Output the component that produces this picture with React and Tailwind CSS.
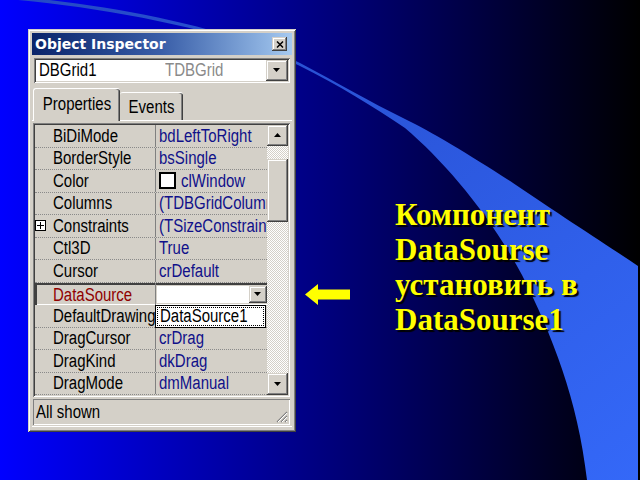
import React from "react";

const raised =
  "shadow-[inset_-1px_-1px_0_#404040,inset_1px_1px_0_#d4d0c8,inset_-2px_-2px_0_#808080,inset_2px_2px_0_#ffffff]";
const sunken =
  "shadow-[inset_1px_1px_0_#808080,inset_-1px_-1px_0_#ffffff,inset_2px_2px_0_#404040,inset_-2px_-2px_0_#d4d0c8]";

function T({ children, className = "" }) {
  return <span className={"inline-block scale-y-[1.2] whitespace-nowrap " + className}>{children}</span>;
}

function DownTri() {
  return (
    <svg width="8" height="5" viewBox="0 0 8 5">
      <polygon points="0,0 7,0 3.5,4" fill="#000" />
    </svg>
  );
}

function UpTri() {
  return (
    <svg width="8" height="5" viewBox="0 0 8 5">
      <polygon points="0,4 7,4 3.5,0" fill="#000" />
    </svg>
  );
}

const rows = [
  { n: "BiDiMode", v: "bdLeftToRight" },
  { n: "BorderStyle", v: "bsSingle" },
  { n: "Color", v: "clWindow", box: true },
  { n: "Columns", v: "(TDBGridColumns)" },
  { n: "Constraints", v: "(TSizeConstraints)", plus: true },
  { n: "Ctl3D", v: "True" },
  { n: "Cursor", v: "crDefault" },
  { n: "DataSource", v: "", ds: true },
  { n: "DefaultDrawing", v: "True" },
  { n: "DragCursor", v: "crDrag" },
  { n: "DragKind", v: "dkDrag" },
  { n: "DragMode", v: "dmManual" },
];

function Row({ r }) {
  if (r.ds) {
    return (
      <div className="flex h-[22.5px] shadow-[inset_2px_2px_0_#404040,inset_0_-1px_0_#ffffff]">
        <div className="w-[120px] shrink-0 flex items-center pl-[18px] pt-[2px] overflow-hidden text-[#900000]">
          <T>{r.n}</T>
        </div>
        <div className="w-px bg-[#808080] self-stretch" />
        <div className="flex-1 flex pt-[3px] pb-[2px] pl-px">
          <div className="flex-1 bg-white" />
          <div className={"w-[18px] bg-[#d4d0c8] flex items-center justify-center " + raised}>
            <DownTri />
          </div>
        </div>
      </div>
    );
  }
  return (
    <div className="flex h-[22.5px] border-b border-dotted border-[#8a8a8a]">
      <div className="w-[120px] shrink-0 flex items-center relative overflow-hidden">
        {r.plus && (
          <div className="absolute left-0 top-[5px] w-[11px] h-[11px] border border-black bg-white flex items-center justify-center">
            <svg width="7" height="7" viewBox="0 0 7 7">
              <rect x="0" y="3" width="7" height="1" fill="#000" />
              <rect x="3" y="0" width="1" height="7" fill="#000" />
            </svg>
          </div>
        )}
        <T className="ml-[18px]">{r.n}</T>
      </div>
      <div className="w-px bg-[#808080] self-stretch" />
      <div className="flex-1 flex items-center pl-[3px] overflow-hidden text-[#10108a]">
        {r.box && <div className="w-[17px] h-[17px] border-2 border-black bg-white mr-[5px] shrink-0" />}
        <T>{r.v}</T>
      </div>
    </div>
  );
}

function Inspector() {
  return (
    <div
      className={
        "ml-[28px] mt-[29px] w-[268px] h-[403px] bg-[#d4d0c8] p-[4px] flex flex-col font-['Liberation_Sans',Arial,sans-serif] text-[15px] text-black " +
        "shadow-[inset_1px_1px_0_#d4d0c8,inset_-1px_-1px_0_#404040,inset_2px_2px_0_#ffffff,inset_-2px_-2px_0_#808080]"
      }
    >
      {/* title bar */}
      <div className="h-[22px] shrink-0 flex items-center justify-between bg-gradient-to-r from-[#0a246a] via-[#3a5ea8] to-[#a6caf0]">
        <span className="pl-[3px] font-['DejaVu_Sans',sans-serif] font-bold text-[14px] text-white leading-none">
          Object Inspector
        </span>
        <div className={"mr-[5px] w-[15px] h-[14px] bg-[#d4d0c8] flex items-center justify-center " + raised}>
          <svg width="8" height="7" viewBox="0 0 8 7">
            <path d="M1 0.5 L7 6.5 M7 0.5 L1 6.5" stroke="#000" strokeWidth="1.5" />
          </svg>
        </div>
      </div>

      {/* combo */}
      <div className={"mt-[3px] mx-[2px] h-[25px] shrink-0 bg-white flex items-center pl-[5px] pr-[2px] " + sunken}>
        <T className="w-[126px]">DBGrid1</T>
        <T className="flex-1 text-[#8a8a8a]">TDBGrid</T>
        <div className={"w-[22px] h-[21px] bg-[#d4d0c8] flex items-center justify-center " + raised}>
          <DownTri />
        </div>
      </div>

      {/* tabs */}
      <div className="mt-[5px] h-[32px] shrink-0 flex items-end pl-px relative z-10">
        <div className="h-[33px] w-[87px] -mb-px bg-[#d4d0c8] rounded-t-[3px] border-t border-l border-white shadow-[inset_-1px_0_0_#404040,inset_-2px_0_0_#808080] flex items-center justify-center pb-[2px]">
          <T>Properties</T>
        </div>
        <div className="h-[28px] w-[63px] bg-[#d4d0c8] rounded-t-[3px] border-t border-white shadow-[inset_-1px_0_0_#404040,inset_-2px_0_0_#808080] flex items-center justify-center pt-[2px]">
          <T>Events</T>
        </div>
      </div>

      {/* panel */}
      <div className="flex-1 flex flex-col border-t border-white">
        <div className={"mt-[2px] ml-px w-[257px] h-[274px] p-[2px] bg-[#d4d0c8] " + sunken}>
          <div className="flex h-full">
            <div className="w-[232px] relative">
              {rows.map((r) => (
                <Row key={r.n} r={r} />
              ))}
              {/* dropdown list */}
              <div className="absolute left-[120px] top-[180px] w-[111px] h-[23px] bg-white border border-black p-px">
                <div className="h-full border border-dotted border-black flex items-center pl-[2px] overflow-hidden">
                  <T>DataSource1</T>
                </div>
              </div>
            </div>
            {/* scrollbar */}
            <div className="w-[21px] flex flex-col bg-[image:repeating-conic-gradient(#ffffff_0_25%,#d4d0c8_0_50%)] bg-[length:2px_2px]">
              <div className={"h-[21px] shrink-0 bg-[#d4d0c8] flex items-center justify-center " + raised}>
                <UpTri />
              </div>
              <div className="h-[13px] shrink-0" />
              <div className={"h-[63px] shrink-0 bg-[#d4d0c8] " + raised} />
              <div className="flex-1" />
              <div className={"h-[22px] shrink-0 bg-[#d4d0c8] flex items-center justify-center " + raised}>
                <DownTri />
              </div>
            </div>
          </div>
        </div>

        {/* status bar */}
        <div className="mt-[2px] ml-px w-[257px] h-[26px] flex items-center justify-between pl-[3px] shadow-[inset_1px_1px_0_#808080,inset_-1px_-1px_0_#ffffff]">
          <T>All shown</T>
          <svg width="13" height="13" viewBox="0 0 13 13" className="self-end mb-[2px] mr-[2px]">
            <path d="M12 2 L2 12 M12 6 L6 12 M12 10 L10 12" stroke="#808080" strokeWidth="1.2" />
            <path d="M12 3 L3 12 M12 7 L7 12 M12 11 L11 12" stroke="#ffffff" strokeWidth="1" />
          </svg>
        </div>
        <div className="flex-1 border-t border-white mt-[1px]" />
      </div>
    </div>
  );
}

export default function App() {
  return (
    <div className="relative w-[640px] h-[480px] overflow-hidden bg-black">
      <svg className="absolute inset-0" width="640" height="480" viewBox="0 0 640 480">
        <defs>
          <linearGradient id="bg" x1="0" y1="0" x2="1" y2="0">
            <stop offset="0" stopColor="#0000ff" />
            <stop offset="1" stopColor="#000000" />
          </linearGradient>
          <linearGradient id="band" x1="0" y1="0" x2="1" y2="1">
            <stop offset="0" stopColor="#2448c4" />
            <stop offset="1" stopColor="#3468f8" />
          </linearGradient>
        </defs>
        <rect width="640" height="480" fill="url(#bg)" />
        <path
          d="M -5,-2 C 100,6 230,30 300,66 C 340,86 372,106 405,128 C 445,162 490,215 522,275 C 552,335 578,400 587,480 L 638,480 L 638,266 C 610,247 560,215 513,183 C 470,155 432,132 403,118 C 370,102 338,83 300,63 C 230,27 100,2 -5,-5 Z"
          fill="url(#band)"
        />
      </svg>
      <div className="relative flex items-start">
        <Inspector />
        <svg width="46" height="22" viewBox="0 0 46 22" className="ml-[9px] mt-[284px] shrink-0">
          <polygon points="0,10.5 13,0 13,5.5 45,5.5 45,15.5 13,15.5 13,21" fill="#ffff00" />
        </svg>
        <div className="ml-[44px] mt-[197px] font-['Liberation_Serif','Times_New_Roman',serif] font-bold text-[31px] leading-[35px] text-[#ffff00] [text-shadow:2px_2px_1px_#000000] whitespace-nowrap">
          <div>Компонент</div>
          <div>DataSourse</div>
          <div>установить в</div>
          <div>DataSourse1</div>
        </div>
      </div>
    </div>
  );
}
